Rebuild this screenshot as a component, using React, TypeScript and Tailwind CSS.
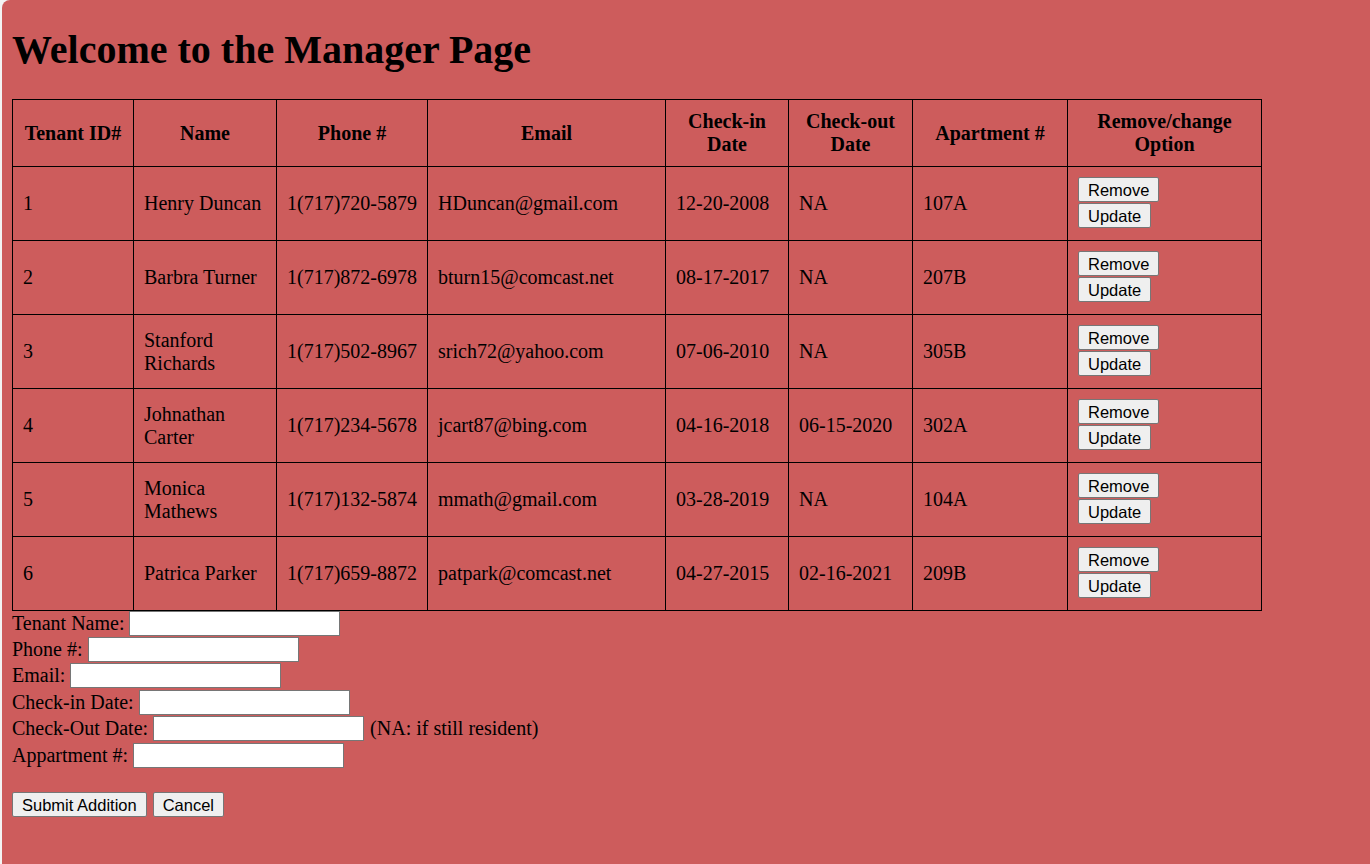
import React from 'react';

interface Tenant {
  id: number;
  name: string;
  phone: string;
  email: string;
  checkIn: string;
  checkOut: string;
  apt: string;
}

const tenants: Tenant[] = [
  { id: 1, name: 'Henry Duncan', phone: '1(717)720-5879', email: 'HDuncan@gmail.com', checkIn: '12-20-2008', checkOut: 'NA', apt: '107A' },
  { id: 2, name: 'Barbra Turner', phone: '1(717)872-6978', email: 'bturn15@comcast.net', checkIn: '08-17-2017', checkOut: 'NA', apt: '207B' },
  { id: 3, name: 'Stanford Richards', phone: '1(717)502-8967', email: 'srich72@yahoo.com', checkIn: '07-06-2010', checkOut: 'NA', apt: '305B' },
  { id: 4, name: 'Johnathan Carter', phone: '1(717)234-5678', email: 'jcart87@bing.com', checkIn: '04-16-2018', checkOut: '06-15-2020', apt: '302A' },
  { id: 5, name: 'Monica Mathews', phone: '1(717)132-5874', email: 'mmath@gmail.com', checkIn: '03-28-2019', checkOut: 'NA', apt: '104A' },
  { id: 6, name: 'Patrica Parker', phone: '1(717)659-8872', email: 'patpark@comcast.net', checkIn: '04-27-2015', checkOut: '02-16-2021', apt: '209B' },
];

const cols = [121, 143, 151, 238, 123, 124, 155, 194];

const btn = 'bg-[#efefef] border border-[#767676] rounded-[2px] px-[9px] h-[25px] text-[16.5px] leading-[18px] text-black [font-family:"Liberation_Sans",Arial,sans-serif]';

const fields: [string, string?][] = [
  ['Tenant Name:'],
  ['Phone #:'],
  ['Email:'],
  ['Check-in Date:'],
  ['Check-Out Date:', '(NA: if still resident)'],
  ['Appartment #:'],
];

export default function App() {
  return (
    <div className="min-h-[864px] bg-[#f3f3f3] pl-[2px] flex">
      <div className="flex-1 min-h-[864px] bg-[#cd5c5c] rounded-tl-[8px] pl-[10px] text-black text-[20px] [font-family:'Liberation_Serif','Times_New_Roman',serif]">
        <h1 className="text-[40px] font-bold leading-[46px] pt-[27px] mb-[26px]">Welcome to the Manager Page</h1>

        <table className="table-fixed border-collapse w-[1250px]">
          <colgroup>
            {cols.map((w, i) => <col key={i} style={{ width: w }} />)}
          </colgroup>
          <thead>
            <tr className="h-[67px]">
              {['Tenant ID#', 'Name', 'Phone #', 'Email', 'Check-in Date', 'Check-out Date', 'Apartment #', 'Remove/change Option'].map((h) => (
                <th key={h} className="border border-black px-[10px] leading-[23px] font-bold text-center align-middle">{h}</th>
              ))}
            </tr>
          </thead>
          <tbody>
            {tenants.map((t) => (
              <tr key={t.id} className="h-[74px]">
                <td className="border border-black px-[10px] leading-[23px]">{t.id}</td>
                <td className="border border-black px-[10px] leading-[23px]">{t.name}</td>
                <td className="border border-black px-[10px] leading-[23px]">{t.phone}</td>
                <td className="border border-black px-[10px] leading-[23px]">{t.email}</td>
                <td className="border border-black px-[10px] leading-[23px]">{t.checkIn}</td>
                <td className="border border-black px-[10px] leading-[23px]">{t.checkOut}</td>
                <td className="border border-black px-[10px] leading-[23px]">{t.apt}</td>
                <td className="border border-black px-[10px]">
                  <div className="flex flex-col items-start gap-[1px] -mt-[2px]">
                    <button className={btn}>Remove</button>
                    <button className={btn}>Update</button>
                  </div>
                </td>
              </tr>
            ))}
          </tbody>
        </table>

        <div className="-mt-[1px]">
          {fields.map(([label, note]) => (
            <div key={label} className="flex items-center h-[26.4px] leading-[23px]">
              <span>{label}</span>
              <input type="text" className="ml-[5px] w-[211px] h-[25px] bg-white border border-[#767676] outline-none" />
              {note && <span className="ml-[6px]">{note}</span>}
            </div>
          ))}
        </div>

        <div className="flex gap-[6px] mt-[24px]">
          <button className={btn}>Submit Addition</button>
          <button className={btn}>Cancel</button>
        </div>
      </div>
    </div>
  );
}
